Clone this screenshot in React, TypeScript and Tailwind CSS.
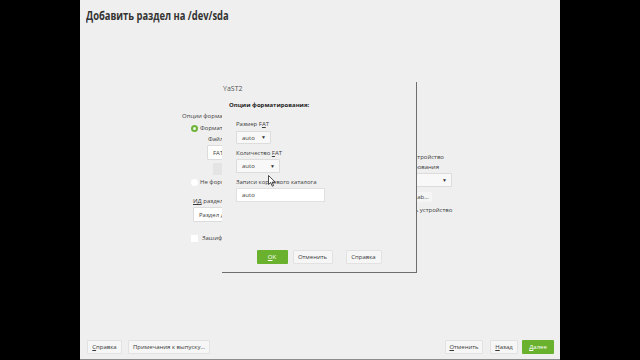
import React from 'react';

// Small helpers for the YaST-style widgets
function Radio({ checked }: { checked?: boolean }) {
  return (
    <span
      className={`flex h-[7px] w-[7px] shrink-0 items-center justify-center rounded-full ${
        checked ? 'bg-[#6fb43a]' : 'bg-white'
      }`}
    >
      {checked && <span className="h-[3px] w-[3px] rounded-full bg-[#e9f5df]" />}
    </span>
  );
}

function Combo({ value, className }: { value: string; className: string }) {
  return (
    <div
      className={`flex items-center justify-between rounded-[1px] border border-[#dcdcdc] bg-[#f8f8f8] pl-[5px] pr-[4px] ${className}`}
    >
      <span>{value}</span>
      <span className="text-[5px] leading-none text-[#333]">▼</span>
    </div>
  );
}

function Btn({
  children,
  className = '',
  green,
}: {
  children: React.ReactNode;
  className?: string;
  green?: boolean;
}) {
  return (
    <div
      className={`flex h-[14px] items-center justify-center rounded-[1px] ${
        green ? 'bg-[#6ab22e] text-white' : 'border border-[#e2e2e2] bg-[#f6f6f6] text-[#3a3a3a]'
      } ${className}`}
    >
      {children}
    </div>
  );
}

export default function App() {
  return (
    <div className="flex h-[360px] w-[640px] bg-black font-['Open_Sans',sans-serif] text-[6px] leading-[8px] text-[#3c3c3c]">
      <div className="w-[80px] shrink-0" />

      <div className="relative flex h-full w-[480px] shrink-0 flex-col border-b border-[#8c8c8c] bg-[#efefef]">
        {/* Header: condensed bold title */}
        <h1 className="origin-left scale-x-[0.75] whitespace-nowrap pl-[8px] pt-[8px] text-[12.5px] font-bold leading-[16px] text-[#333]">
          Добавить раздел на /dev/sda
        </h1>

        {/* Background form (partly hidden by the popup) */}
        <div className="flex flex-1 pl-[102px] pt-[88px]">
          <div className="flex w-[178px] flex-col">
            <div>Опции форматирования</div>
            <div className="mt-[4px] flex h-[8px] items-center gap-[2px] pl-[9px]">
              <Radio checked />
              <span>Форматировать раздел</span>
            </div>
            <div className="mt-[3px] pl-[26px]">Файловая система</div>
            <Combo value="FAT" className="ml-[25px] mt-[2px] h-[15px] w-[80px] bg-white" />
            <div className="ml-[31px] mt-[3px] h-[12px] w-[60px] rounded-[1px] bg-[#e4e4e4]" />
            <div className="mt-[3px] flex h-[8px] items-center gap-[2px] pl-[9px]">
              <Radio />
              <span>Не форматировать раздел</span>
            </div>
            <div className="mt-[11px] pl-[11px]">
              <span className="underline">ИД</span> раздела:
            </div>
            <Combo value="Раздел данных Linux" className="ml-[11px] mt-[2px] h-[15px] w-[110px] bg-white" />
            <div className="mt-[12px] flex h-[8px] items-center gap-[4px] pl-[9px]">
              <span className="h-[7px] w-[7px] bg-white" />
              <span>Зашифровать устройство</span>
            </div>
          </div>

          <div className="flex flex-col">
            <div className="mt-[41px] flex h-[8px] items-center gap-[3px]">
              <Radio checked />
              <span>Монтировать устройство</span>
            </div>
            <div className="mt-[2px] pl-[17px]">Точка монтирования</div>
            <Combo value="" className="ml-[12px] mt-[2px] h-[14px] w-[80px] bg-[#f7f7f7]" />
            <div className="ml-[12px] mt-[5px] flex h-[10px] w-[60px] items-center justify-center rounded-[1px] bg-[#f5f5f5]">
              Параметры fstab...
            </div>
            <div className="mt-[4px] flex h-[8px] items-center gap-[3px]">
              <Radio />
              <span>Не монтировать устройство</span>
            </div>
          </div>
        </div>

        {/* Bottom bar */}
        <div className="flex items-center px-[6px] pb-[5px] pl-[7px]">
          <Btn className="w-[35px]">
            <span className="underline">С</span>правка
          </Btn>
          <Btn className="ml-[6px] w-[82px]">Примечания к выпуску...</Btn>
          <div className="flex-1" />
          <Btn className="w-[38px]">
            <span className="underline">О</span>тменить
          </Btn>
          <Btn className="ml-[7px] w-[28px]">
            <span className="underline">Н</span>азад
          </Btn>
          <Btn green className="ml-[4px] w-[32px]">
            <span className="underline">Д</span>алее
          </Btn>
        </div>

        {/* Popup dialog */}
        <div className="absolute left-[142px] top-[82px] flex h-[191px] w-[195px] flex-col border-b border-r border-[#6e6e6e] bg-[#efefef]">
          <div className="flex h-[14px] items-center pl-[1px] text-[7px] text-[#555]">YaST2</div>
          <div className="mt-[5px] pl-[7px] font-bold text-[#222]">Опции форматирования:</div>
          <div className="flex flex-col pl-[14px]">
            <div className="mt-[11px]">
              Размер F<span className="underline">A</span>T
            </div>
            <Combo value="auto" className="mt-[3px] h-[13px] w-[35px]" />
            <div className="mt-[5px]">
              Количество <span className="underline">F</span>AT
            </div>
            <Combo value="auto" className="mt-[2px] h-[14px] w-[44px]" />
            <div className="mt-[5px]">Записи корневого каталога</div>
            <div className="mt-[2px] flex h-[14px] w-[89px] items-center border border-[#e0e0e0] bg-white pl-[5px]">
              auto
            </div>
          </div>
          <div className="mt-auto flex justify-center pb-[8px]">
            <Btn green className="h-[13px] w-[31px]">
              <span className="underline">O</span>K
            </Btn>
            <Btn className="ml-[5px] h-[13px] w-[40px]">Отменить</Btn>
            <Btn className="ml-[13px] h-[13px] w-[36px]">Справка</Btn>
          </div>
        </div>

        {/* Mouse pointer */}
        <svg
          className="absolute left-[188px] top-[175px]"
          width="8"
          height="12"
          viewBox="0 0 8 12"
        >
          <path d="M0.5 0.5 L0.5 9.5 L2.7 7.6 L4.3 11.2 L5.6 10.6 L4.1 7.1 L7.2 7.1 Z" fill="#fff" stroke="#222" strokeWidth="0.8" />
        </svg>
      </div>

      <div className="flex-1" />
    </div>
  );
}
